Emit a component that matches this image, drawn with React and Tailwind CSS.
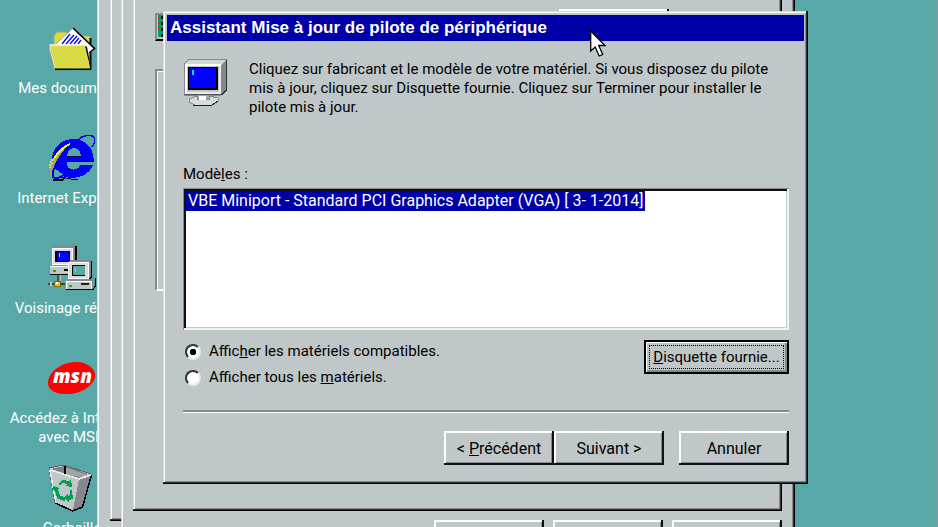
import React, { useState } from "react";
import clsx from "clsx";

const RAISED =
  "bg-[#c0c7c8] shadow-[inset_-1px_-1px_#000,inset_-2px_-2px_#303238,inset_1px_1px_#d8dcdd,inset_2px_2px_#fff,inset_-3px_-3px_#87888f]";
const BUTTON =
  "bg-[#c0c7c8] shadow-[inset_-2px_-2px_#101014,inset_2px_2px_#fff,inset_-3px_-3px_#87888f]";

function DocumentsIcon() {
  return (
    <svg viewBox="0 0 48 48" className="h-12 w-12">
      <defs>
        <pattern id="dither" width="3" height="3" patternUnits="userSpaceOnUse">
          <rect width="3" height="3" fill="#e4e414" />
          <rect width="1.5" height="1.5" fill="#ccd078" />
          <rect x="1.5" y="1.5" width="1.5" height="1.5" fill="#ccd078" />
        </pattern>
      </defs>
      <path d="M6 21V12l3-4h9l3 4h20l2 2v31H8z" fill="url(#dither)" stroke="#a0a488" />
      <path d="M42.500 14v31H7" fill="none" stroke="#000" strokeWidth="2" />
      <path d="M7 21 24.500 4.500 46 24l-5 6-8-5z" fill="#fff" stroke="#a0a4a8" />
      <path d="M25 4 46.500 24.500 41 29" fill="none" stroke="#000" strokeWidth="1.5" />
      <path d="m14 20 8-10m-4 10 8-9m-4 9 7-8m-3 8 5-6m-1 6 3-4" stroke="#0000ff" strokeWidth="1.3" />
      <path d="m36 21 3 2 4 22z" fill="#000" />
      <path d="M2 21h35l5 23.500H6.500z" fill="url(#dither)" />
      <path d="M6.500 44 2 27v-6h35" fill="none" stroke="#f4f4f0" strokeWidth="1.5" />
      <path d="M1 27v-6M1.500 27l4.500 17" fill="none" stroke="#87888f" />
    </svg>
  );
}

function ExplorerIcon() {
  return (
    <svg viewBox="0 0 48 48" className="h-12 w-12" shapeRendering="crispEdges">
      <path d="M31 6C33 1 45 0 46.500 4c1 4-1 8-3 9" fill="none" stroke="#0000f0" strokeWidth="1.5" />
      <path
        fillRule="evenodd"
        d="M45.700 27.500c.500-13-8-22.500-20-22.500C13 5 4 14 4 25c0 11 9 19 20 19 10 0 18-5 21-13H32c-1 2.500-3 4-6.500 4-4 0-6.500-3-6.500-7.500zM19 22c.500-5 3-8 7-8s6.500 3 7 8z"
        fill="#0000f8"
      />
      <path d="M19 31c1 3 3 4.500 6.500 4.500S31 34 32 31z" fill="#58a8a8" />
      <path d="M19 22h14M19 27.500h26.500M13 43l10 2h7" fill="none" stroke="#000060" strokeWidth="1" />
      <path d="M22 9C15 12 7 20 3.500 28 1 34 1 40 4 45c0-7 1-13 5-19 3-6 8-11 13-17z" fill="#a8a860" />
      <path d="M22 10C15 13 9 19 6 25" fill="none" stroke="#ffff00" strokeWidth="2" />
      <path d="M5 25c-2 3-3 6-3 9" fill="none" stroke="#d8d8b0" strokeWidth="2" strokeDasharray="2 1" />
      <path d="M6 34c-1 3-2 6-1 9 2 2 7 1 11-2" fill="#58a8a8" stroke="#0000f0" strokeWidth="2" />
      <path d="M5 46h9l4-3" fill="none" stroke="#000" strokeWidth="1.5" />
      <path d="m9 31 6 7m-4-9 8 9m-5-7 8 9" stroke="#000090" strokeWidth="1" strokeDasharray="1 2" />
    </svg>
  );
}

function NetworkIcon() {
  return (
    <svg viewBox="0 0 48 48" className="h-12 w-12" shapeRendering="crispEdges">
      <path d="m4 4 2-3h22v17l-3 3H4z" fill="#87888f" />
      <path d="M28 2v17l-3 2" fill="none" stroke="#000" strokeWidth="2" />
      <path d="M4 4h20v16H4z" fill="#d8dcdd" stroke="#fff" />
      <path d="M7 7h15v11H7z" fill="#000" />
      <path d="M9 8h12v9H9z" fill="#0000ff" />
      <path d="M11 9h1v4h-1z" fill="#40f0ff" />
      <path d="M1 22h19v8H1z" fill="#c0c7c8" stroke="#87888f" />
      <path d="M2 22.500h18" stroke="#fff" />
      <path d="M5 26h3v2H5z" fill="#00c000" />
      <path d="M16 25h4v2h-4z" fill="#000" />
      <path d="M2 30.500h18" stroke="#000" />
      <path d="M9 31h2v6H9z" fill="#505050" />
      <path d="M12 31h1v6h-1z" fill="#c0c7c8" />
      <path d="M0 39h17v2H0z" fill="#404040" />
      <path d="M2 38h2v4H2z" fill="#c0c7c8" />
      <path d="M6 37h6v5H6z" fill="#d0c840" stroke="#806800" />
      <path d="M8 38h2v2H8z" fill="#fff" />
      <path d="m20 19 2-3h21v17l-3 3H20z" fill="#87888f" />
      <path d="M43.500 17v16l-3 3" fill="none" stroke="#000" strokeWidth="1.5" />
      <path d="M20 18h20v16H20z" fill="#d8dcdd" stroke="#fff" />
      <path d="M24 21h13v11H24z" fill="#000" />
      <path d="M25 22h12v9H25z" fill="#58a8a8" />
      <path d="M27 24h1v4h-1z" fill="#40f0ff" />
      <path d="m18 38 3-3h21l4-3v10l-2 3H18z" fill="#87888f" />
      <path d="M18 37h25v8H18z" fill="#c0c7c8" stroke="#fff" />
      <path d="M21 41h3v2h-3z" fill="#00c000" />
      <path d="M33 39h8v2h-8z" fill="#202020" />
      <path d="M18 45.500h27l2-3V34" fill="none" stroke="#000" />
    </svg>
  );
}

function MsnIcon() {
  return (
    <svg viewBox="0 0 48 48" className="h-12 w-12">
      <path d="M26 8c13-1 23 7 21 16C44 33 31 41 17 40 5 40-1 34 0 27 2 17 13 9 26 8z" fill="#ff0000" />
      <text x="5" y="29" fill="#fff" fontSize="19" fontWeight="800" fontStyle="italic" fontFamily="'Open Sans', sans-serif">
        msn
      </text>
    </svg>
  );
}

function BinIcon() {
  return (
    <svg viewBox="0 0 48 48" className="h-12 w-12" shapeRendering="crispEdges">
      <path d="m1 4 14-3 28 9-9 33-10 4L7 39z" fill="#c0c7c8" stroke="#606468" />
      <path d="m3 5 13-3 24 8-9 4z" fill="#808488" />
      <path d="m17 3 22 8-8 2-14-3z" fill="#a0a4a8" />
      <path d="M17 2v8" stroke="#000" strokeWidth="1.5" />
      <path d="m31 15 12-4-9 32-9 3z" fill="#87888f" />
      <path d="m43.500 11-9 32-10 4-17-8" fill="none" stroke="#000" strokeWidth="1.5" />
      <path d="m2 6 29 9 12-4" fill="none" stroke="#e8ecec" strokeWidth="1.5" />
      <path d="m2 6 6 33" stroke="#e8ecec" strokeWidth="1.5" />
      <path d="m10 20 4-4 7 1 2-2 1 8-7-1 2-2-5-1-2 3z" fill="#00a050" />
      <path d="m5 22 7 2-2 1 2 7 5 1v4l-7-2-4-9-2 1z" fill="#00a050" />
      <path d="m24 26 1 9-4 1v3l-5-5 4-5v3l2-1v-5z" fill="#00a050" />
    </svg>
  );
}

function MonitorIcon() {
  return (
    <svg viewBox="0 0 48 48" className="h-12 w-12 shrink-0" shapeRendering="crispEdges">
      <path d="m1 6 5-5h37v31l-5 5H1z" fill="#c0c7c8" stroke="#87888f" />
      <path d="m38 7 5-5v30l-5 5z" fill="#87888f" />
      <path d="M43.500 2v30l-5 5" fill="none" stroke="#303238" strokeWidth="1.5" />
      <path d="m2 6 4-4h36l-4 4z" fill="#d0d5d6" />
      <path d="M2.500 36V6.500h35" fill="none" stroke="#fff" strokeWidth="2" />
      <path d="M36.500 8v26.500H4" fill="none" stroke="#e8ecec" strokeWidth="2" />
      <path d="M4.500 8.500h30V32h-30z" fill="#000" />
      <path d="M6 10h27v20H6z" fill="#0000ff" />
      <path d="M9 12h2v5H9z" fill="#20d8ff" />
      <path d="M2 36.500h36" stroke="#505458" />
      <path d="M14 37h12v4H14z" fill="#a0a4a8" />
      <path d="m6 41 8-3v3h12v-3l9 2v3l-6 4H12l-6-3z" fill="#d8dcdd" stroke="#87888f" />
      <path d="M16 38h7v4h-7z" fill="#fff" />
      <path d="m10 47h19l6-4" fill="none" stroke="#202020" />
    </svg>
  );
}

function CardIcon() {
  return (
    <svg viewBox="0 0 30 24" className="h-6" shapeRendering="crispEdges">
      <path d="M1 0h29v22H1z" fill="#00a060" />
      <path d="M1 2h2v2H1zm0 5h2v2H1zm0 5h2v2H1z" fill="#f02020" />
      <path d="M4 1h2v3H4zm0 6h2v3H4zm0 6h2v3H4zm0 6h2v3H4z" fill="#000" />
    </svg>
  );
}

const SHORTCUTS = [
  { label: "Mes documents", Icon: DocumentsIcon },
  { label: "Internet Explorer", Icon: ExplorerIcon },
  { label: "Voisinage réseau", Icon: NetworkIcon },
  { label: "Accédez à Internet avec MSN", Icon: MsnIcon },
  { label: "Corbeille", Icon: BinIcon },
];

function Shortcuts() {
  return (
    <ul className="w-36 pt-6 text-white">
      {SHORTCUTS.map(({ label, Icon }) => (
        <li key={label} className="flex h-[110px] flex-col items-center px-1 text-center">
          <Icon />
          <span className="mt-[7px] leading-[19px]">{label}</span>
        </li>
      ))}
    </ul>
  );
}

function Button({ className, ...props }) {
  return (
    <button
      type="button"
      className={clsx("h-[34px] w-[110px] text-base leading-[19px] whitespace-nowrap", BUTTON, className)}
      {...props}
    />
  );
}

// feuille de propriétés, derrière l'assistant
function PropertySheet() {
  return (
    <section className={clsx("absolute -top-10 left-[121px] w-[674px] pt-3 pr-[13px] pb-4 pl-3", RAISED)}>
      <div className={clsx("h-[539px] px-[22px] pt-[37px]", RAISED)}>
        <div className="flex items-start justify-between pr-[91px]">
          <div className="mt-1 border-2 border-t-[#87888f] border-r-white border-b-black border-l-[#87888f]">
            <CardIcon />
          </div>
          <Button aria-label="Modifier" />
        </div>
        <div className="mt-[26px] h-[222px] border-2 border-[#87888f] border-r-white border-b-white shadow-[inset_1px_1px_#fff]" />
      </div>
      <div className="mt-[9px] flex justify-end gap-[9px]">
        <Button aria-label="OK" />
        <Button aria-label="Annuler" />
        <Button aria-label="Appliquer" />
      </div>
    </section>
  );
}

function Choice({ checked, onChange, children }) {
  return (
    <label className="flex items-center gap-2">
      <input
        type="radio"
        name="filtre"
        checked={checked}
        onChange={onChange}
        className="h-4 w-4 appearance-none rounded-full border-2 border-t-[#303238] border-r-[#e8ecec] border-b-[#e8ecec] border-l-[#303238] bg-white checked:bg-[radial-gradient(circle,#000_3px,#fff_3px)]"
      />
      <span>{children}</span>
    </label>
  );
}

function Wizard() {
  const [filter, setFilter] = useState("compatibles");

  return (
    <section
      role="dialog"
      aria-labelledby="titre"
      className={clsx("absolute top-[11px] left-[163px] w-[645px] p-1", RAISED)}
    >
      <h1
        id="titre"
        className="h-[26px] bg-[#0000a8] px-[3px] font-['Liberation_Sans',Arial,sans-serif] text-[17px] leading-[26px] font-bold text-white"
      >
        Assistant Mise à jour de pilote de périphérique
      </h1>

      <div className="pt-[17px] pr-[15px] pb-[15px] pl-4">
        <div className="flex gap-4">
          <div className="w-[50px]">
            <MonitorIcon />
          </div>
          <p className="mt-[2px] flex-1">
            Cliquez sur fabricant et le modèle de votre matériel. Si vous disposez du pilote
            mis à jour, cliquez sur Disquette fournie. Cliquez sur Terminer pour installer le
            pilote mis à jour.
          </p>
        </div>

        <p id="modeles" className="mt-12">
          Modè<u>l</u>es :
        </p>
        <ul
          role="listbox"
          aria-labelledby="modeles"
          className="mt-1 h-[142px] bg-white p-[3px] shadow-[inset_1px_1px_#87888f,inset_-2px_-2px_#f0f3f3,inset_3px_3px_#101014,inset_-3px_-3px_#c0c7c8]"
        >
          <li
            role="option"
            aria-selected="true"
            className="h-5 w-[459px] bg-[#0000a8] px-[2px] text-base leading-5 whitespace-nowrap text-white"
          >
            VBE Miniport - Standard PCI Graphics Adapter (VGA) [ 3- 1-2014]
          </li>
        </ul>

        <div className="mt-[10px] flex items-start justify-between">
          <fieldset className="flex flex-col gap-[7px] pt-[2px] pl-[2px]">
            <Choice checked={filter === "compatibles"} onChange={() => setFilter("compatibles")}>
              Affic<u>h</u>er les matériels compatibles.
            </Choice>
            <Choice checked={filter === "tous"} onChange={() => setFilter("tous")}>
              Afficher tous les <u>m</u>atériels.
            </Choice>
          </fieldset>
          <button
            type="button"
            className="h-[34px] w-[145px] border-2 border-black bg-[#c0c7c8] p-[3px] whitespace-nowrap shadow-[inset_1px_1px_#fff,inset_-2px_-2px_#87888f]"
          >
            <span className="block h-6 border border-dotted border-black leading-[22px]">
              <u>D</u>isquette fournie...
            </span>
          </button>
        </div>

        <hr className="mt-[23px] h-[3px] border-0 border-t-2 border-b border-t-[#87888f] border-b-white" />

        <div className="mt-[18px] flex justify-end">
          <Button>
            &lt; <u>P</u>récédent
          </Button>
          <Button>Suivant &gt;</Button>
          <Button className="ml-[15px]">Annuler</Button>
        </div>
      </div>
    </section>
  );
}

function Pointer() {
  return (
    <svg viewBox="0 0 17 28" className="pointer-events-none absolute top-[30px] left-[590px] h-7 w-[17px]">
      <path d="M.7 1v20l4.500-4 4 9 3.500-1.500-4-9H15z" fill="#fff" stroke="#000" strokeWidth="1.3" />
    </svg>
  );
}

export default function App() {
  return (
    <main className="relative h-screen w-full overflow-hidden border-r border-[#909494] bg-[#58a8a8] font-[Roboto,sans-serif] text-[15px] leading-[19px] text-black">
      <Shortcuts />
      <section className={clsx("absolute -top-10 left-[97px] w-[600px] px-[13px] pt-3 pb-10", RAISED)}>
        <div className={clsx("h-[549px]", RAISED)} />
      </section>
      <PropertySheet />
      <Wizard />
      <Pointer />
    </main>
  );
}
